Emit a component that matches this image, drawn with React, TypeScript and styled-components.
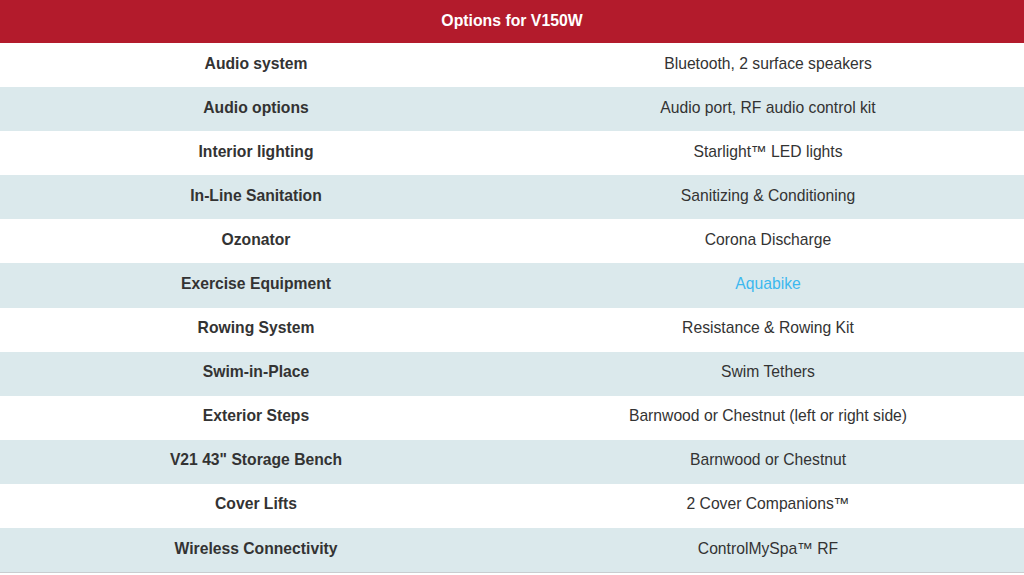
import React from "react";
import styled, { createGlobalStyle } from "styled-components";

const Global = createGlobalStyle`
  html, body { margin: 0; padding: 0; background: #ffffff; }
  body { font-family: "Liberation Sans", Arial, sans-serif; }
`;

const Table = styled.div`
  width: 1024px;
  display: flex;
  flex-direction: column;
  border-bottom: 1px solid #c9cdd0;
`;

const Header = styled.div`
  height: 43px;
  box-sizing: border-box;
  padding-bottom: 2px;
  background: #b31b2c;
  color: #ffffff;
  font-weight: bold;
  font-size: 15.8px;
  display: flex;
  align-items: center;
  justify-content: center;
`;

const Row = styled.div<{ $alt: boolean }>`
  height: 44.1px;
  box-sizing: border-box;
  padding-bottom: 3px;
  display: grid;
  grid-template-columns: 1fr 1fr;
  align-items: center;
  background: ${(p) => (p.$alt ? "#dbe9ec" : "#ffffff")};
`;

const Label = styled.div`
  text-align: center;
  font-weight: bold;
  font-size: 15.7px;
  color: #333333;
`;

const Value = styled.div<{ $link?: boolean }>`
  text-align: center;
  font-size: 15.7px;
  color: ${(p) => (p.$link ? "#3db8ef" : "#333333")};
`;

const rows: [string, string, boolean?][] = [
  ["Audio system", "Bluetooth, 2 surface speakers"],
  ["Audio options", "Audio port, RF audio control kit"],
  ["Interior lighting", "Starlight™ LED lights"],
  ["In-Line Sanitation", "Sanitizing & Conditioning"],
  ["Ozonator", "Corona Discharge"],
  ["Exercise Equipment", "Aquabike", true],
  ["Rowing System", "Resistance & Rowing Kit"],
  ["Swim-in-Place", "Swim Tethers"],
  ["Exterior Steps", "Barnwood or Chestnut (left or right side)"],
  ['V21 43" Storage Bench', "Barnwood or Chestnut"],
  ["Cover Lifts", "2 Cover Companions™"],
  ["Wireless Connectivity", "ControlMySpa™ RF"],
];

export default function App() {
  return (
    <>
      <Global />
      <Table>
        <Header>Options for V150W</Header>
        {rows.map(([l, v, link], i) => (
          <Row key={l} $alt={i % 2 === 1}>
            <Label>{l}</Label>
            <Value $link={!!link}>{v}</Value>
          </Row>
        ))}
      </Table>
    </>
  );
}
